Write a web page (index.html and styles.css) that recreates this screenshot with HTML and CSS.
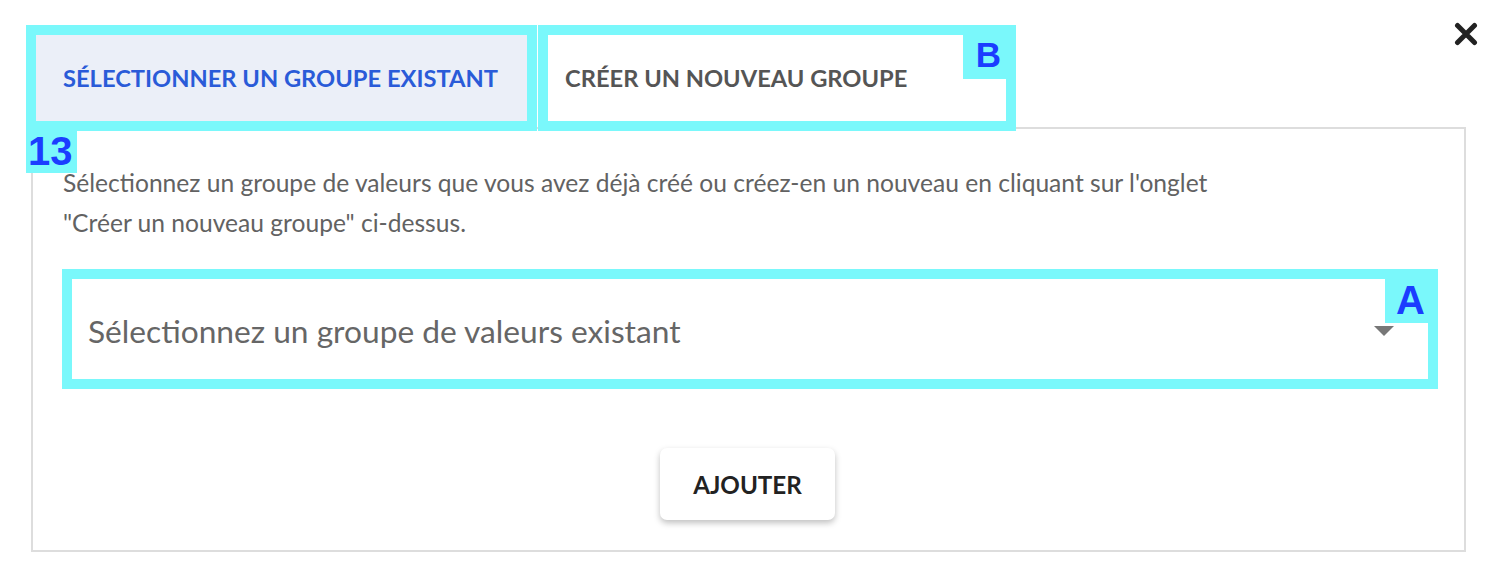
FILE: index.html
```html
<!DOCTYPE html>
<html lang="fr">
<head>
    <meta charset="UTF-8">
    <meta name="viewport" content="width=device-width, initial-scale=1.0">
    <title>Groupe de valeurs</title>
    <link rel="stylesheet" href="styles.css">
</head>
<body>
    <div class="modal">
        <button class="close-btn" aria-label="Fermer">
            <svg width="24" height="24" viewBox="0 0 24 24">
                <path d="M3.5 3.5 L20.5 20.5 M20.5 3.5 L3.5 20.5" stroke="#222" stroke-width="5" stroke-linecap="round"/>
            </svg>
        </button>

        <div class="tabs">
            <div class="tab tab-active marked">
                Sélectionner un groupe existant
                <span class="mark mark-below">13</span>
            </div>
            <div class="tab marked">
                Créer un nouveau groupe
                <span class="mark mark-corner mark-small">B</span>
            </div>
        </div>

        <div class="panel">
            <p class="intro">Sélectionnez un groupe de valeurs que vous avez déjà créé ou créez-en un nouveau en cliquant sur l'onglet "Créer un nouveau groupe" ci-dessus.</p>

            <div class="select marked">
                <span class="select-placeholder">Sélectionnez un groupe de valeurs existant</span>
                <span class="select-arrow"></span>
                <span class="mark mark-corner">A</span>
            </div>

            <div class="actions">
                <button class="add-btn">Ajouter</button>
            </div>
        </div>
    </div>
</body>
</html>
```

FILE: styles.css
```css
/* General */
body {
    margin: 0;
    background: #fff;
    font-family: Lato, "Open Sans", sans-serif;
    color: #5f5f5f;
}

.modal {
    position: relative;
    width: 1440px;
    padding: 25px 0 0 26px;
}

/* Close button */
.close-btn {
    position: absolute;
    top: 22px;
    right: -12px;
    border: none;
    background: none;
    padding: 0;
    cursor: pointer;
}

.close-btn svg {
    display: block;
}

/* Tabs */
.tabs {
    display: flex;
    gap: 1px;
    position: relative;
    z-index: 1;
}

.tab {
    position: relative;
    box-sizing: border-box;
    height: 106px;
    display: flex;
    align-items: center;
    font-size: 23.7px;
    font-weight: 700;
    text-transform: uppercase;
    color: #555;
    background: #fff;
}

.tab:first-child {
    width: 511px;
    padding-left: 37px;
}

.tab:nth-child(2) {
    width: 478px;
    padding-left: 27px;
}

.tab-active {
    background: #ebeff8;
    color: #2a5bd8;
}

/* Highlight marks */
.marked {
    outline: 10px solid #7af8fb;
    outline-offset: -10px;
}

.mark {
    position: absolute;
    background: #7af8fb;
    color: #1b3dff;
    font-family: "Liberation Sans", Arial, sans-serif;
    font-weight: 700;
    font-size: 40px;
    line-height: 43px;
    text-transform: none;
}

.mark-below {
    left: 0;
    top: 100%;
    width: 51px;
    height: 42px;
    line-height: 40px;
    padding-left: 2px;
    box-sizing: border-box;
}

.mark-corner {
    top: 10px;
    right: 10px;
    width: 43px;
    height: 44px;
    text-align: right;
    padding-right: 3px;
    box-sizing: border-box;
}

.mark-small {
    font-size: 35px;
    line-height: 40px;
    padding-right: 5px;
}

/* Panel */
.panel {
    box-sizing: border-box;
    width: 1435px;
    margin: -4px 0 0 5px;
    border: 2px solid #dddddd;
    padding: 34px 26px 30px 29px;
}

.intro {
    max-width: 1180px;
    margin: 0 0 26px 1px;
    font-size: 24.6px;
    line-height: 40px;
    color: #626262;
}

/* Select */
.select {
    position: relative;
    box-sizing: border-box;
    height: 120px;
    display: flex;
    align-items: center;
    padding: 4px 44px 0 26px;
}

.select-placeholder {
    flex: 1;
    font-size: 31.7px;
    color: #666;
}

.select-arrow {
    width: 0;
    height: 0;
    border-left: 10px solid transparent;
    border-right: 10px solid transparent;
    border-top: 10px solid #777;
}

/* Button */
.actions {
    display: flex;
    justify-content: center;
    margin-top: 59px;
    padding-right: 5px;
}

.add-btn {
    width: 175px;
    height: 72px;
    border: none;
    border-radius: 7px;
    background: #fff;
    box-shadow: 0 3px 6px rgba(0, 0, 0, 0.25);
    font-family: Lato, sans-serif;
    font-size: 24.2px;
    font-weight: 700;
    text-transform: uppercase;
    color: #222;
    cursor: pointer;
}
```
